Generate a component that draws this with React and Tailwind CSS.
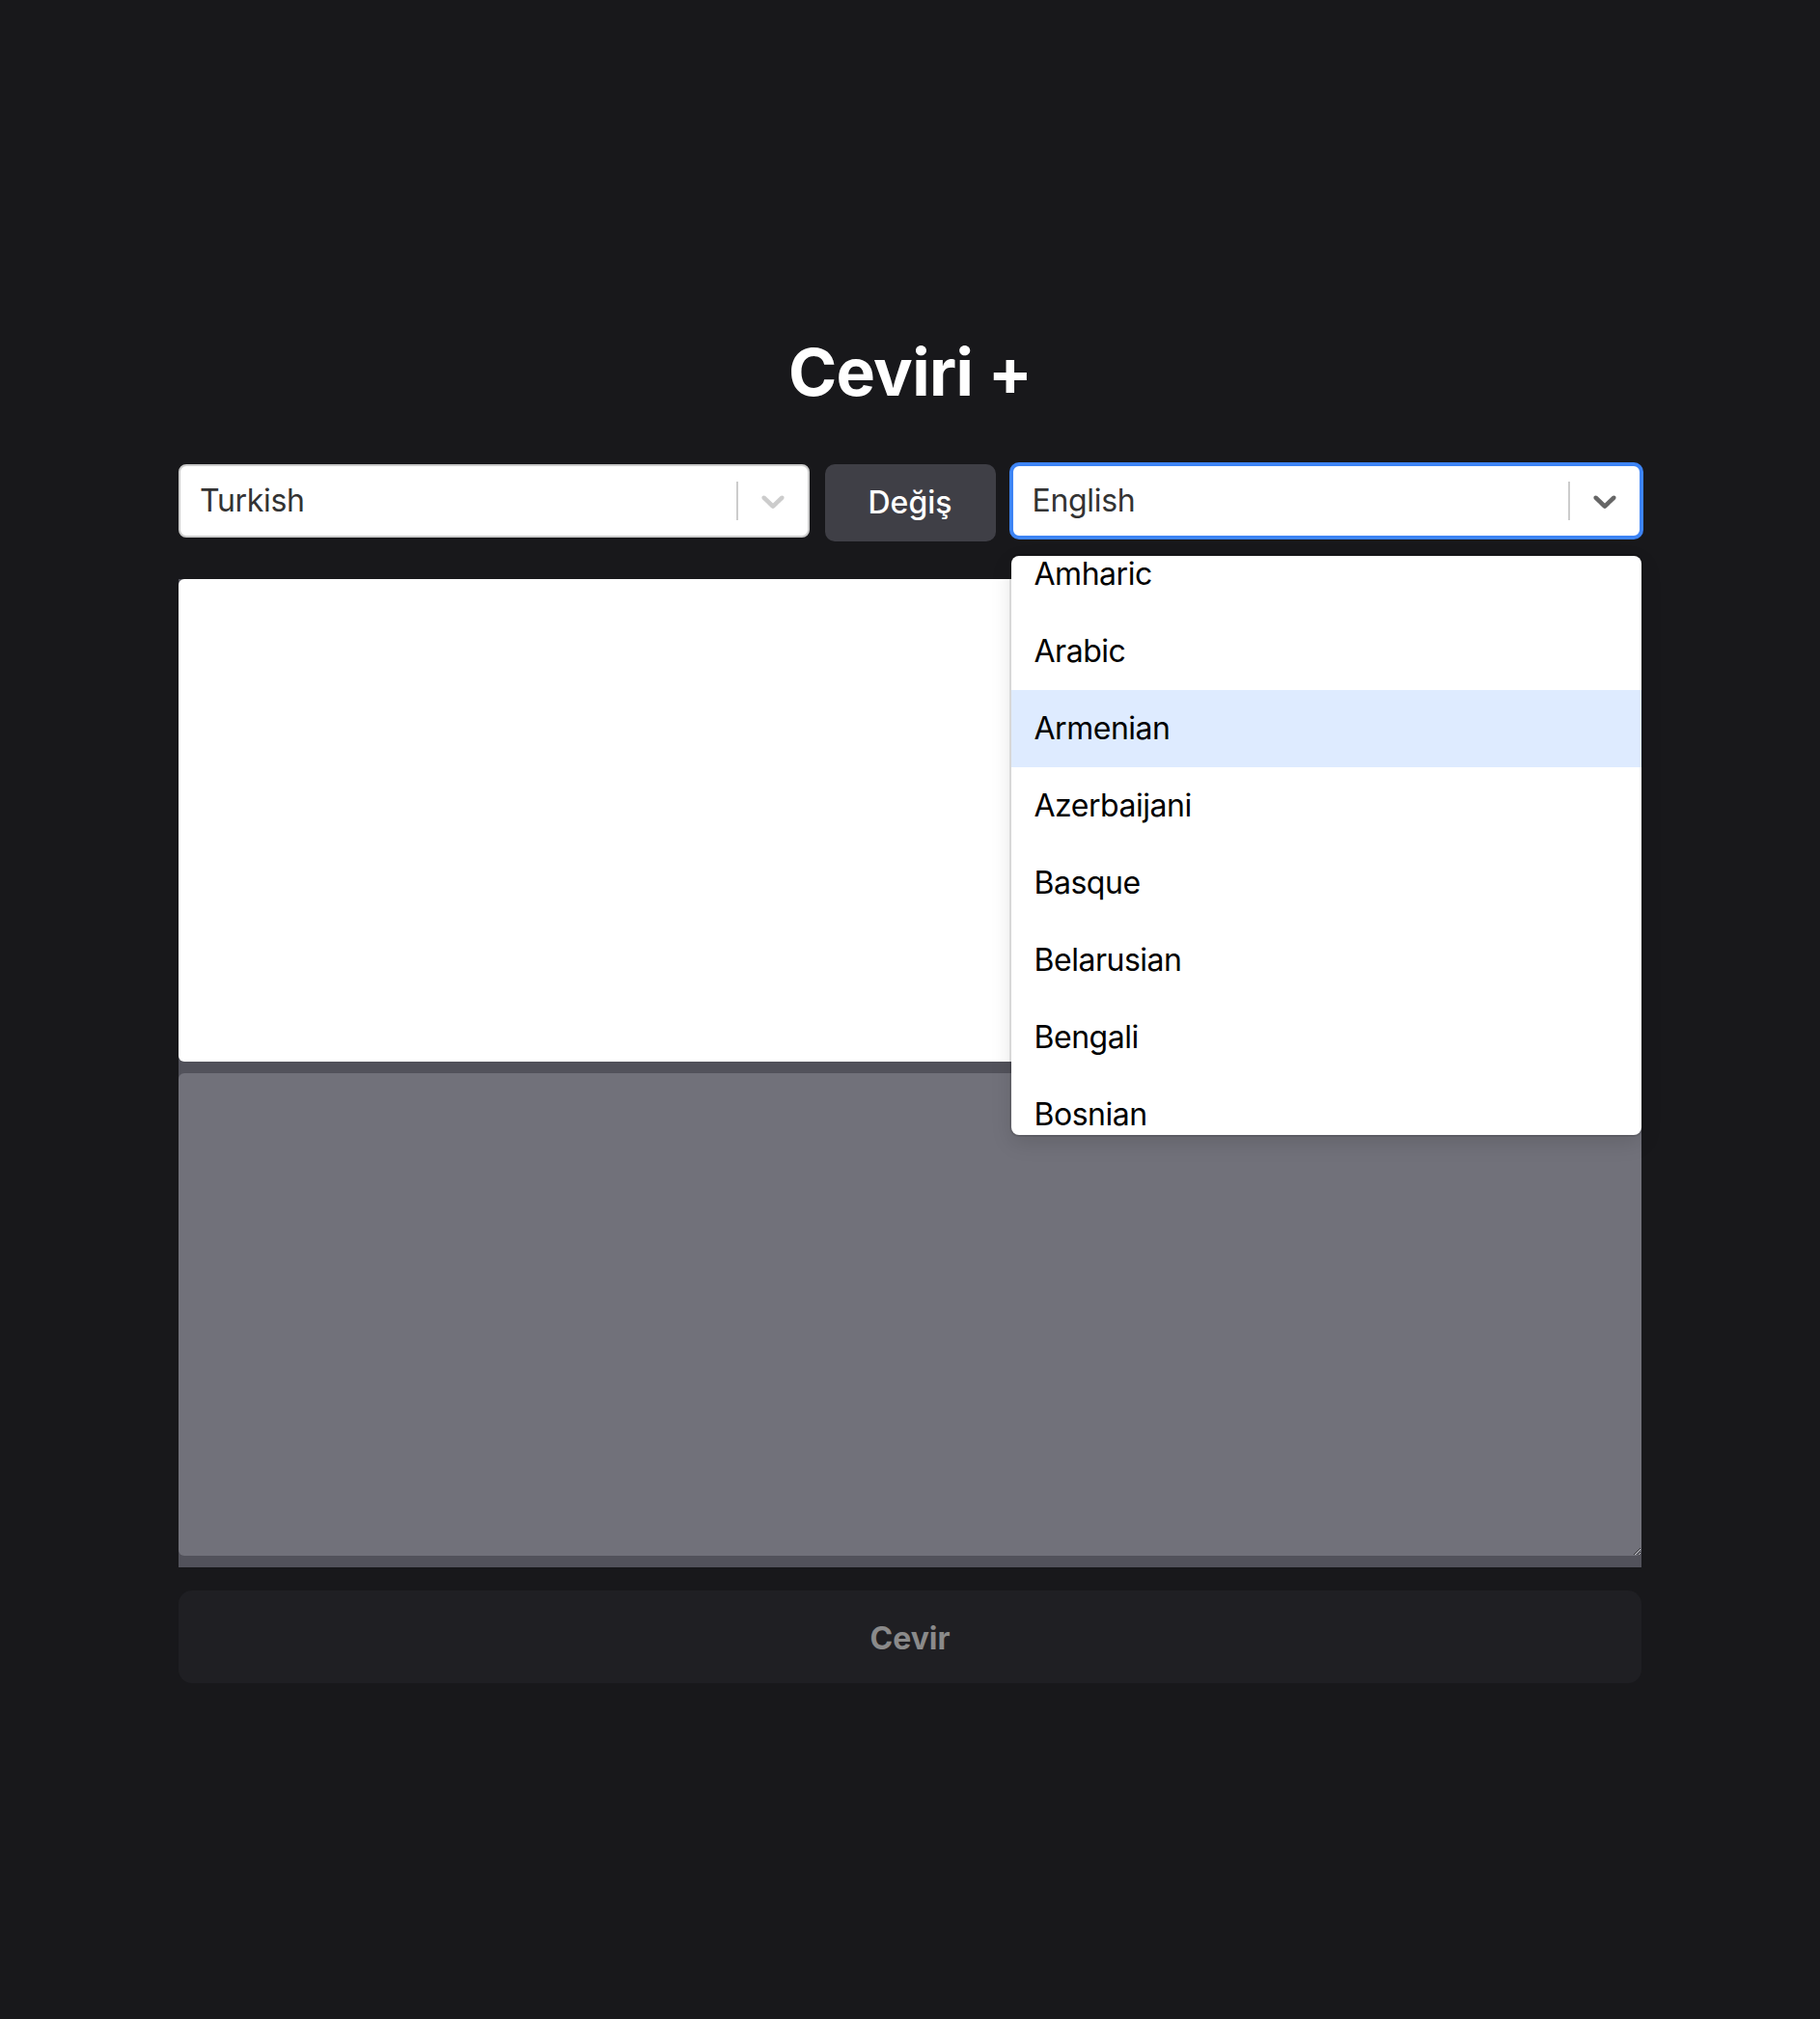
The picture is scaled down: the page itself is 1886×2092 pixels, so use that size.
import React, { useState } from "react";

const FONT = { fontFamily: "Inter, 'Noto Sans', sans-serif" };

// react-select style chevron
function Chevron({ color }) {
  return (
    <svg width="40" height="40" viewBox="0 0 20 20" fill={color} aria-hidden="true">
      <path d="M4.516 7.548c0.436-0.446 1.043-0.481 1.576 0l3.908 3.747 3.908-3.747c0.533-0.481 1.141-0.446 1.574 0 0.436 0.445 0.408 1.197 0 1.615-0.406 0.418-4.695 4.502-4.695 4.502-0.217 0.223-0.502 0.335-0.787 0.335s-0.57-0.112-0.789-0.335c0 0-4.287-4.084-4.695-4.502s-0.436-1.17 0-1.615z" />
    </svg>
  );
}

const LANGS = ["Amharic", "Arabic", "Armenian", "Azerbaijani", "Basque", "Belarusian", "Bengali", "Bosnian", "Bulgarian"];

function LangSelect({ value, focused, children }) {
  return (
    <div className="relative flex-1">
      <div
        className={
          focused
            ? "flex h-[76px] items-center rounded-[8px] border-2 border-[#3d84f5] bg-white shadow-[0_0_0_2px_#3d84f5]"
            : "flex h-[76px] items-center rounded-[8px] border-2 border-[#cccccc] bg-white"
        }
      >
        <div className="flex-1 px-[20px] text-[32px] tracking-[-0.01em] text-[#333333]">{value}</div>
        <span className="my-[16px] w-[2px] self-stretch bg-[#cccccc]" />
        <div className="flex items-center px-[16px]">
          <Chevron color={focused ? "#666666" : "#cccccc"} />
        </div>
      </div>
      {children}
    </div>
  );
}

export default function App() {
  const [text, setText] = useState("");
  const [hover] = useState("Armenian");

  return (
    <div className="min-h-screen bg-[#18181b] pt-[351px]" style={FONT}>
      <div className="mx-auto w-[1516px]">
        <h1 className="text-center text-[68px] font-bold leading-none tracking-[-0.01em] text-white">Ceviri +</h1>

        <div className="mt-[62px] flex items-start gap-[16px]">
          <LangSelect value="Turkish" />
          <button className="h-[80px] w-[177px] rounded-[10px] bg-[#3f3f46] text-[32px] font-medium text-white">
            Değiş
          </button>
          <LangSelect value="English" focused>
            <div className="absolute left-0 right-0 top-[95px] z-10 h-[600px] overflow-hidden rounded-[8px] bg-white shadow-[0_0_0_2px_rgba(0,0,0,0.1),0_8px_22px_rgba(0,0,0,0.12)]">
              <div className="-mt-[21px]">
                {LANGS.map((l) => (
                  <div
                    key={l}
                    className={
                      l === hover
                        ? "h-[80px] bg-[#deebff] px-[24px] py-[16px] text-[32px] leading-[48px] tracking-[-0.015em] text-black"
                        : "h-[80px] px-[24px] py-[16px] text-[32px] leading-[48px] tracking-[-0.015em] text-black"
                    }
                  >
                    {l}
                  </div>
                ))}
              </div>
            </div>
          </LangSelect>
        </div>

        <div className="mt-[39px] flex flex-col gap-[12px] bg-[#52525b] pb-[12px]">
          <textarea
            value={text}
            onChange={(e) => setText(e.target.value)}
            className="block h-[500px] w-full rounded-[6px] bg-white p-4 text-[32px] text-black outline-none"
          />
          <textarea
            readOnly
            className="block h-[500px] w-full rounded-[6px] bg-[#71717a] p-4 text-[32px] text-white outline-none"
          />
        </div>

        <button
          disabled
          className="mt-[24px] h-[96px] w-full rounded-[14px] bg-[#1f1f23] pt-[3px] text-[32px] font-bold text-[#8a8a8a]"
        >
          Cevir
        </button>
      </div>
    </div>
  );
}
